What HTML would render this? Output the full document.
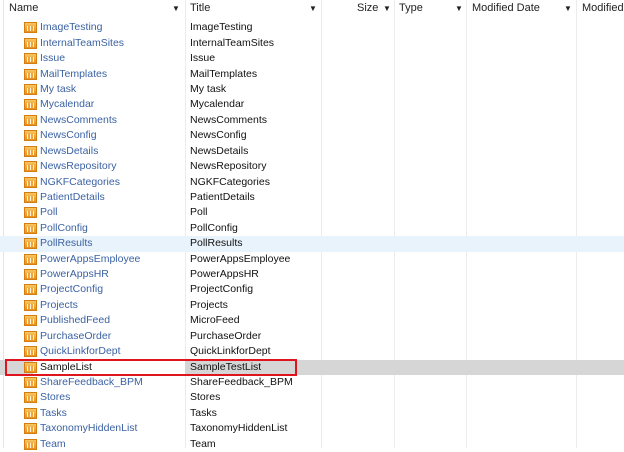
<!DOCTYPE html>
<html><head><style>
body{margin:0;width:624px;height:448px;overflow:hidden;background:#fff;font-family:"Liberation Sans",sans-serif;font-size:10.5px;position:relative}
.hdr{position:absolute;top:0;left:0;width:624px;height:17px;color:#222;font-size:11px}
.hdr span{position:absolute;top:2px}
.arr{font-size:8px;top:4px!important}
.sep{position:absolute;top:0;height:448px;width:1px;background:#ececec}
.row{position:absolute;left:0;width:624px;height:15.4px}
.ic{position:absolute;left:24px;top:2px;width:13px;height:11px;background:linear-gradient(#f7c560,#e8901c);border:1px solid #d47d10;box-sizing:border-box}
.ic:after{content:"";position:absolute;left:2px;right:2px;top:3px;bottom:1px;background:repeating-linear-gradient(90deg,#fff6d8 0 1px,#f0a43a 1px 3px)}
.n{position:absolute;left:40px;top:1px;color:#3b62a3}
.t{position:absolute;left:190px;top:1px;color:#111}
</style></head><body>
<div class="sep" style="left:3px;background:#e4e4e4"></div>
<div class="sep" style="left:185px"></div>
<div class="sep" style="left:321px"></div>
<div class="sep" style="left:394px"></div>
<div class="sep" style="left:466px"></div>
<div class="sep" style="left:576px"></div>
<div class="hdr">
<span style="left:9px">Name</span><span class="arr" style="left:172px">▼</span>
<span style="left:190px">Title</span><span class="arr" style="left:309px">▼</span>
<span style="left:357px">Size</span><span class="arr" style="left:383px">▼</span>
<span style="left:399px">Type</span><span class="arr" style="left:455px">▼</span>
<span style="left:472px">Modified Date</span><span class="arr" style="left:564px">▼</span>
<span style="left:582px">Modified</span>
</div>
<div id="rows"></div>
<div style="position:absolute;left:5px;top:359px;width:292px;height:17px;border:2px solid #e0141c;box-sizing:border-box"></div>
<script>
var d=[["ImageTesting","ImageTesting"],["InternalTeamSites","InternalTeamSites"],["Issue","Issue"],["MailTemplates","MailTemplates"],["My task","My task"],["Mycalendar","Mycalendar"],["NewsComments","NewsComments"],["NewsConfig","NewsConfig"],["NewsDetails","NewsDetails"],["NewsRepository","NewsRepository"],["NGKFCategories","NGKFCategories"],["PatientDetails","PatientDetails"],["Poll","Poll"],["PollConfig","PollConfig"],["PollResults","PollResults"],["PowerAppsEmployee","PowerAppsEmployee"],["PowerAppsHR","PowerAppsHR"],["ProjectConfig","ProjectConfig"],["Projects","Projects"],["PublishedFeed","MicroFeed"],["PurchaseOrder","PurchaseOrder"],["QuickLinkforDept","QuickLinkforDept"],["SampleList","SampleTestList"],["ShareFeedback_BPM","ShareFeedback_BPM"],["Stores","Stores"],["Tasks","Tasks"],["TaxonomyHiddenList","TaxonomyHiddenList"],["Team","Team"]];
var h="";
d.forEach(function(r,i){
var top=20.3+i*15.42;var bg="";
if(i==14)bg="background:#e9f3fc;";
if(i==22)bg="background:linear-gradient(90deg,#d6d6d6 0 33px,#fff 33px 185px,#d6d6d6 185px);";
h+='<div class="row" style="top:'+top+'px;'+bg+'"><div class="ic"></div><span class="n"'+(i==22?' style="color:#111"':'')+'>'+r[0]+'</span><span class="t">'+r[1]+'</span></div>';
});
document.getElementById("rows").innerHTML=h;
</script>
</body></html>
